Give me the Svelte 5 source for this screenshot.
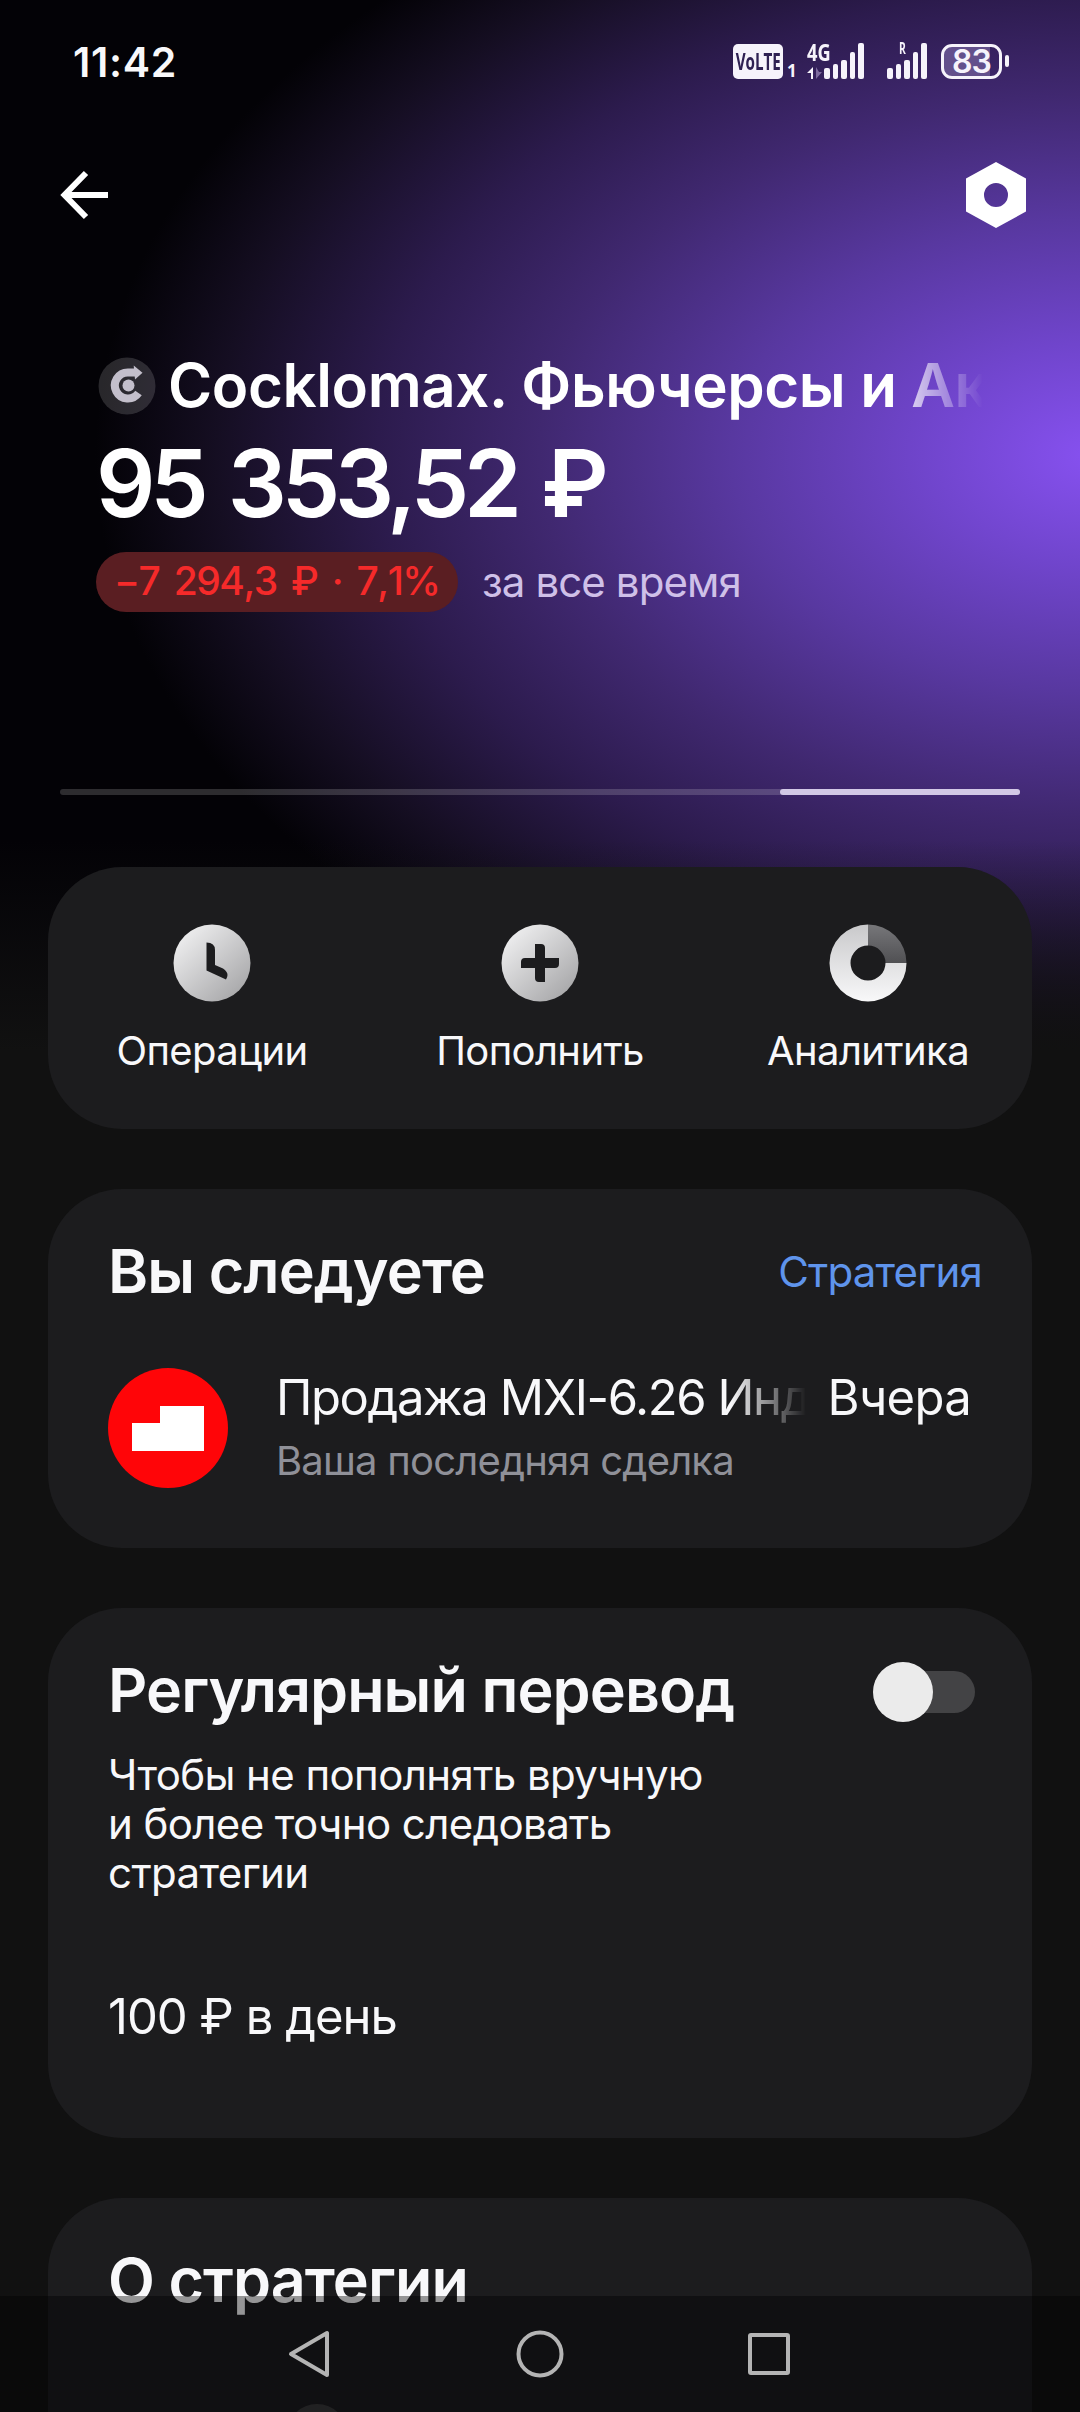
<script lang="ts">
	interface Action {
		id: 'history' | 'topup' | 'analytics';
		label: string;
	}

	const actions: Action[] = [
		{ id: 'history', label: 'Операции' },
		{ id: 'topup', label: 'Пополнить' },
		{ id: 'analytics', label: 'Аналитика' }
	];

	// Signal bar heights, px
	const bars = [11, 15, 19, 27, 36];

	let regular = $state(false);
</script>

<div class="screen">
	<header class="status-bar">
		<span class="time">11:42</span>
		<div class="indicators">
			<span class="volte"><b>VoLTE</b></span>
			<span class="sim">1</span>
			<div class="signal lte">
				<span class="net">4G</span>
				<svg class="traffic" viewBox="0 0 15 12">
					<path d="M6 0v12H4V6H0z" fill="#f6f3fb" />
					<path d="M9 0v12l6-7h-3z" fill="#7e6b9f" />
				</svg>
				{#each bars as h}
					<i style="height: {h}px"></i>
				{/each}
			</div>
			<div class="signal roaming">
				<span class="net">R</span>
				{#each bars as h}
					<i style="height: {h}px"></i>
				{/each}
			</div>
			<div class="battery"><span>83</span></div>
			<i class="battery-tip"></i>
		</div>
	</header>

	<nav class="toolbar">
		<button aria-label="Назад">
			<svg width="49" height="50" viewBox="0 0 49 50" fill="none" stroke="#fff" stroke-width="6">
				<path d="M26 3L4.500 25L26 47M4 25H48" />
			</svg>
		</button>
		<button aria-label="Настройки">
			<svg width="60" height="66" viewBox="0 0 60 66">
				<path fill="#fff" fill-rule="evenodd" d="M30 0L60 16.500V49.500L30 66L0 49.500V16.500zM30 21a12 12 0 1 0 0 24a12 12 0 1 0 0-24z" />
			</svg>
		</button>
	</nav>

	<section class="summary">
		<div class="strategy">
			<svg width="58" height="58" viewBox="0 0 58 58">
				<circle cx="29" cy="29" r="28.500" fill="#fff" fill-opacity="0.15" />
				<path d="M40.500 36A13 13 0 1 1 30 15.500H37" fill="none" stroke="#c3bfcb" stroke-width="8" />
				<path d="M35.700 8.500L44.500 15.800L37 22.500z" fill="#c3bfcb" />
				<circle cx="30.500" cy="28.500" r="6" fill="#c3bfcb" />
			</svg>
			<h1>Cocklomax. Фьючерсы и Ак</h1>
		</div>
		<p class="amount">95 353,52 ₽</p>
		<div class="change">
			<span class="pill">−7 294,3 ₽ · 7,1%</span>
			<span class="period">за все время</span>
		</div>
	</section>

	<div class="pager"><i></i></div>

	<main>
		<section class="card actions">
			{#each actions as action (action.id)}
				<button class="action">
					<svg width="78" height="78" viewBox="0 0 78 78">
						<defs>
							<linearGradient id="metal" x1="0.1" y1="0.1" x2="0.85" y2="0.9">
								<stop offset="0" stop-color="#efeff0" />
								<stop offset="1" stop-color="#a9a9ab" />
							</linearGradient>
							<linearGradient id="ring" x1="0" y1="0" x2="0" y2="1">
								<stop offset="0" stop-color="#c9c9cb" />
								<stop offset="1" stop-color="#f8f8f9" />
							</linearGradient>
							<linearGradient id="sector" x1="0" y1="0" x2="0" y2="1">
								<stop offset="0" stop-color="#77777a" />
								<stop offset="1" stop-color="#505053" />
							</linearGradient>
						</defs>
						{#if action.id === 'history'}
							<circle cx="39" cy="39" r="38.500" fill="url(#metal)" />
							<path d="M33.500 18.500Q42 18.500 42 26V41L50 44.500Q54.500 47.500 54.500 51Q54.500 53 53 55.500L33.500 46.500z" fill="#1c1c1e" />
						{:else if action.id === 'topup'}
							<circle cx="39" cy="39" r="38.500" fill="url(#metal)" />
							<path d="M34 20H40Q44 20 44 24V34H58V40Q58 44 54 44H44V58H38Q34 58 34 54V44H20V38Q20 34 24 34H34z" fill="#1c1c1e" />
						{:else}
							<path d="M39 0.500A38.500 38.500 0 1 0 77.500 39H56.500A17.500 17.500 0 1 1 39 21.500z" fill="url(#ring)" />
							<path d="M39 0.500A38.500 38.500 0 0 1 77.500 39H56.500A17.500 17.500 0 0 0 39 21.500z" fill="url(#sector)" />
						{/if}
					</svg>
					<span class="label">{action.label}</span>
				</button>
			{/each}
		</section>

		<section class="card following">
			<div class="card-head">
				<h2>Вы следуете</h2>
				<a href="#strategy">Стратегия</a>
			</div>
			<div class="deal">
				<svg width="120" height="120" viewBox="0 0 120 120">
					<circle cx="60" cy="60" r="60" fill="#ff0508" />
					<path d="M24 55H52V38H96V83H24z" fill="#fff" />
				</svg>
				<div class="deal-text">
					<div class="deal-row">
						<span class="deal-name">Продажа MXI-6.26 Инд</span>
						<span class="deal-date">Вчера</span>
					</div>
					<span class="deal-note">Ваша последняя сделка</span>
				</div>
			</div>
		</section>

		<section class="card regular">
			<div class="card-head">
				<h2>Регулярный перевод</h2>
				<button
					class="toggle"
					class:on={regular}
					role="switch"
					aria-checked={regular}
					aria-label="Регулярный перевод"
					onclick={() => (regular = !regular)}
				>
					<i></i>
				</button>
			</div>
			<p class="hint">Чтобы не пополнять вручную<br />и более точно следовать<br />стратегии</p>
			<p class="rate">100 ₽ в день</p>
		</section>

		<section class="card about">
			<h2>О стратегии</h2>
			<i class="bullet"></i>
		</section>
	</main>

	<footer class="system-nav">
		<svg width="504" height="50" viewBox="0 0 504 50" fill="none" stroke="#b4b4b4" stroke-width="4" stroke-linejoin="round">
			<path d="M39 4V46L3 25z" />
			<circle cx="252" cy="25" r="21.500" />
			<rect x="462" y="6" width="38" height="38" rx="1" />
		</svg>
	</footer>
</div>

<style>
	:global(body) {
		background: #111111;
	}

	.screen {
		position: relative;
		display: flex;
		flex-direction: column;
		width: 1080px;
		height: 2412px;
		overflow: hidden;
		font-family: Inter, 'Noto Sans', sans-serif;
		color: #f8f8fa;
		background:
			linear-gradient(to bottom, transparent 840px, #111111 1050px),
			radial-gradient(1010px 655px at 1095px 455px, #8751f0 0%, #7045cc 17%, #5838a0 36%, #402870 55%, #2c1b4d 71%, #150e22 87%, #030206 99%);
	}

	.screen > * {
		flex-shrink: 0;
	}

	h1,
	h2,
	p {
		margin: 0;
		font-weight: 600;
		white-space: nowrap;
	}

	button {
		padding: 0;
		border: 0;
		background: none;
		color: inherit;
		font: inherit;
	}

	svg {
		display: block;
		flex-shrink: 0;
	}

	/* Status bar */
	.status-bar {
		display: flex;
		justify-content: space-between;
		height: 122px;
		padding: 0 71px 0 73px;
		box-sizing: border-box;
	}

	.time {
		margin-top: 38px;
		font-size: 41px;
		line-height: 48px;
		font-weight: 600;
		letter-spacing: 0.7px;
	}

	.indicators {
		display: flex;
		align-items: flex-end;
		height: 79px;
		color: #f6f3fb;
	}

	.volte {
		display: flex;
		justify-content: center;
		width: 50px;
		height: 35px;
		border-radius: 5px;
		background: #f6f3fb;
		color: #2f2153;
	}

	.volte b {
		font: 700 23px/35px 'Open Sans', sans-serif;
		transform: scaleX(0.66);
	}

	.sim {
		width: 24px;
		padding-left: 4px;
		box-sizing: border-box;
		font: 700 17px/17px 'Open Sans', sans-serif;
	}

	.signal {
		position: relative;
		display: flex;
		align-items: flex-end;
		gap: 3px;
	}

	.signal i {
		width: 5.600px;
		border-radius: 2px;
		background: #f6f3fb;
	}

	.lte {
		padding-left: 17px;
	}

	.roaming {
		margin: 0 14px 0 23px;
	}

	.net {
		position: absolute;
		left: 0;
		top: -1px;
		font: 700 24px/20px 'Open Sans', sans-serif;
		transform: scaleX(0.76);
		transform-origin: left;
	}

	.roaming .net {
		left: 12px;
		top: -2px;
		font-size: 16px;
		line-height: 14px;
		transform: scaleX(0.65);
	}

	.traffic {
		position: absolute;
		left: 0;
		bottom: 0;
		width: 15px;
		height: 12px;
	}

	.battery {
		width: 61px;
		height: 35px;
		box-sizing: border-box;
		border: 3px solid #f6f3fb;
		border-radius: 11px;
		background: linear-gradient(to right, #63508c 83%, transparent 83%);
		text-align: center;
		font-size: 32px;
		line-height: 30px;
		font-weight: 600;
		letter-spacing: -1px;
	}

	.battery-tip {
		width: 4px;
		height: 12px;
		margin: 0 0 12px 3px;
		border-radius: 2px;
		background: #f6f3fb;
	}

	/* Toolbar */
	.toolbar {
		display: flex;
		align-items: center;
		justify-content: space-between;
		height: 146px;
		padding: 0 54px 0 60px;
	}

	/* Portfolio summary */
	.summary {
		height: 521px;
		padding: 90px 96px 0;
		box-sizing: border-box;
	}

	.strategy {
		display: flex;
		align-items: center;
		gap: 12px;
		height: 56px;
		padding-left: 2px;
	}

	h1 {
		flex: 1;
		padding-bottom: 3px;
		color: #fff;
		font-size: 60px;
		line-height: 76px;
		letter-spacing: -0.4px;
		mask-image: linear-gradient(to right, #000 725px, rgba(0, 0, 0, 0.72) 745px, transparent 815px);
	}

	.amount {
		margin-top: 14px;
		color: #fff;
		font-size: 93px;
		line-height: 110px;
		letter-spacing: -5.200px;
		word-spacing: 6px;
	}

	.change {
		display: flex;
		align-items: center;
		margin-top: 14px;
	}

	.pill {
		width: 362px;
		height: 60px;
		padding-left: 18px;
		box-sizing: border-box;
		border-radius: 30px;
		background: #5a1e22;
		color: #f52a2a;
		font-size: 39px;
		line-height: 58px;
		font-weight: 500;
		font-kerning: none;
		letter-spacing: -1.500px;
		word-spacing: 5.500px;
		white-space: nowrap;
	}

	.period {
		margin-left: 24px;
		padding-bottom: 2px;
		color: #cfc0e8;
		font-size: 42px;
		letter-spacing: -0.900px;
	}

	.pager {
		height: 6px;
		margin: 0 60px 72px;
		border-radius: 3px;
		background: rgba(255, 255, 255, 0.17);
	}

	.pager i {
		display: block;
		width: 240px;
		height: 6px;
		margin-left: auto;
		border-radius: 3px;
		background: #d2c8e6;
	}

	/* Cards */
	main {
		display: flex;
		flex-direction: column;
		gap: 60px;
		padding: 0 48px;
	}

	.card {
		flex-shrink: 0;
		box-sizing: border-box;
		border-radius: 74px;
		background: #1c1c1e;
	}

	.actions {
		display: grid;
		grid-template-columns: repeat(3, 1fr);
		height: 262px;
		padding-top: 57px;
	}

	.action {
		display: flex;
		flex-direction: column;
		align-items: center;
		gap: 24px;
	}

	.label {
		font-size: 40px;
		line-height: 50px;
		letter-spacing: -0.600px;
	}

	.following {
		height: 359px;
		padding: 40px 50px 0 60px;
	}

	.card-head {
		display: flex;
		align-items: center;
		justify-content: space-between;
		height: 84px;
	}

	h2 {
		font-size: 61px;
		line-height: 84px;
		letter-spacing: -0.900px;
	}

	a {
		color: #5f94ec;
		font-size: 42px;
		letter-spacing: -0.800px;
		text-decoration: none;
	}

	.deal {
		display: flex;
		gap: 48px;
		margin-top: 55px;
	}

	.deal-text {
		flex: 1;
		min-width: 0;
	}

	.deal-row {
		display: flex;
		justify-content: space-between;
		height: 60px;
		padding-right: 11px;
		font-size: 49px;
		line-height: 60px;
		white-space: nowrap;
	}

	.deal-name {
		letter-spacing: -1.400px;
		mask-image: linear-gradient(to right, #000 455px, transparent 530px);
	}

	.deal-date {
		letter-spacing: -0.700px;
	}

	.deal-note {
		color: #8f9098;
		font-size: 40px;
		line-height: 66px;
		letter-spacing: -0.800px;
	}

	.regular {
		height: 530px;
		padding: 40px 57px 0 60px;
	}

	.toggle {
		display: flex;
		align-items: center;
		width: 102px;
		height: 42px;
		margin-top: 3px;
		border-radius: 21px;
		background: #434345;
	}

	.toggle i {
		width: 60px;
		height: 60px;
		border-radius: 50%;
		background: #ebebeb;
	}

	.toggle.on i {
		margin-left: auto;
	}

	.hint {
		margin-top: 18px;
		font-size: 42px;
		line-height: 49px;
		font-weight: 400;
		letter-spacing: -0.600px;
	}

	.rate {
		margin-top: 90px;
		font-size: 49px;
		line-height: 60px;
		font-weight: 400;
		letter-spacing: -1px;
	}

	.about {
		height: 420px;
		padding: 40px 60px 0;
	}

	.bullet {
		display: block;
		width: 60px;
		height: 60px;
		margin: 82px 0 0 179px;
		border-radius: 50%;
		background: #38383a;
	}

	/* System navigation */
	.system-nav {
		position: absolute;
		left: 0;
		right: 0;
		bottom: 0;
		display: flex;
		justify-content: center;
		height: 116px;
		padding-top: 33px;
		box-sizing: border-box;
		background: rgba(0, 0, 0, 0.4);
	}
</style>
